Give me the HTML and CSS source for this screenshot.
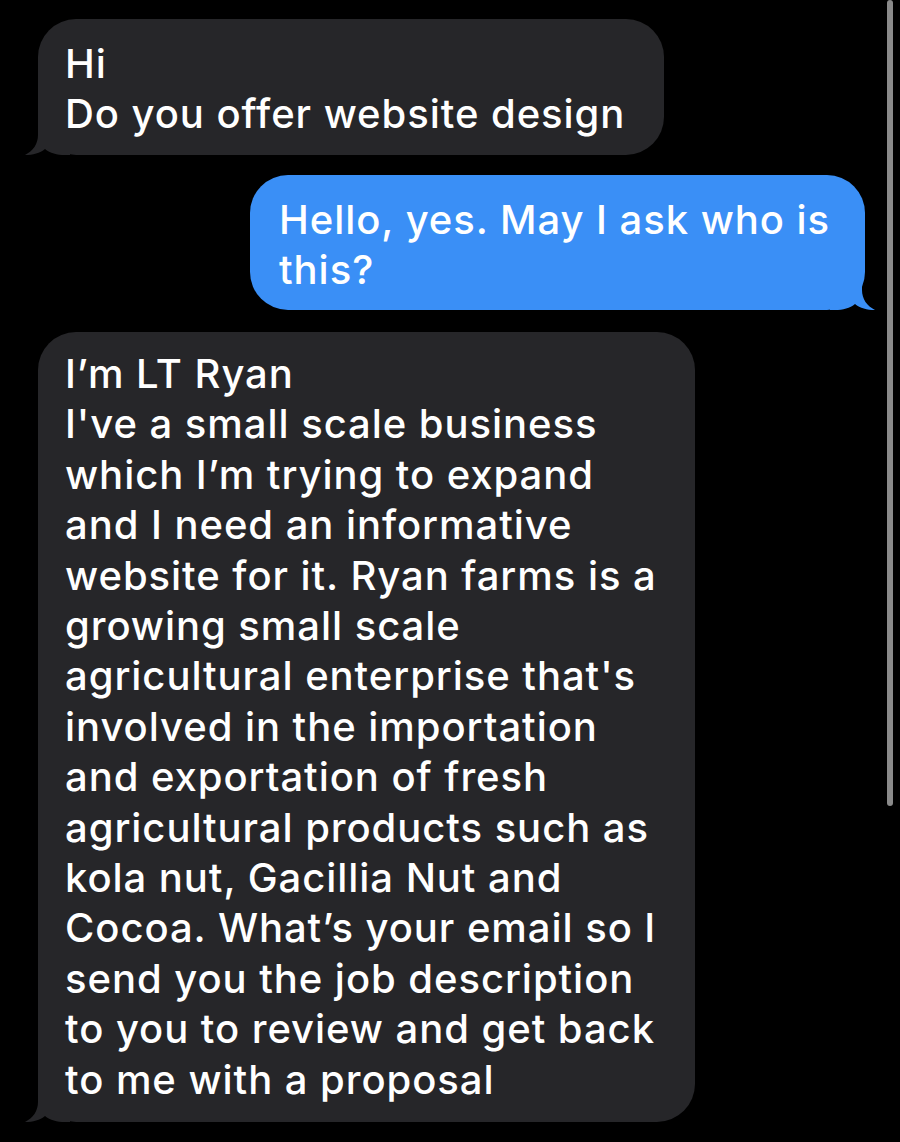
FILE: index.html
```html
<!DOCTYPE html>
<html>
<head>
<meta charset="utf-8">
<link rel="stylesheet" href="styles.css">
</head>
<body>
<div class="thread">
  <div class="bubble in b1">
    <svg class="tail tail-in" width="45" height="40" viewBox="0 0 45 40"><path d="M13 0 L13 20 C13 29 8 36 0 40 C8 40 15 38 20 34 C25 38 32 40 40 40 L45 40 L45 0 Z"/></svg>
    <p class="txt">Hi<br>Do you offer website design</p>
  </div>
  <div class="bubble out b2">
    <svg class="tail tail-out" width="45" height="40" viewBox="0 0 45 40"><path d="M32 0 L32 20 C32 29 37 36 45 40 C37 40 30 38 25 34 C20 38 13 40 5 40 L0 40 L0 0 Z"/></svg>
    <p class="txt">Hello, yes. May I ask who is<br>this?</p>
  </div>
  <div class="bubble in b3">
    <svg class="tail tail-in" width="45" height="40" viewBox="0 0 45 40"><path d="M13 0 L13 20 C13 29 8 36 0 40 C8 40 15 38 20 34 C25 38 32 40 40 40 L45 40 L45 0 Z"/></svg>
    <p class="txt">I’m LT Ryan<br>I've a small scale business<br>which I’m trying to expand<br>and I need an informative<br>website for it. Ryan farms is a<br>growing small scale<br>agricultural enterprise that's<br>involved in the importation<br>and exportation of fresh<br>agricultural products such as<br>kola nut, Gacillia Nut and<br>Cocoa. What’s your email so I<br>send you the job description<br>to you to review and get back<br>to me with a proposal</p>
  </div>
</div>
<div class="scrollbar"></div>
</body>
</html>
```
FILE: styles.css
```css
html, body {
  margin: 0;
  padding: 0;
  background: #000;
}
body {
  width: 900px;
  height: 1142px;
  overflow: hidden;
  position: relative;
  font-family: Inter, "Liberation Sans", sans-serif;
}
.thread {
  display: flex;
  flex-direction: column;
  padding-top: 19px;
}
.bubble {
  position: relative;
  border-radius: 38px;
  box-sizing: border-box;
}
.txt {
  position: relative;
  margin: 0;
  color: #fff;
  font-size: 40px;
  font-weight: 500;
  line-height: 50.4px;
  white-space: nowrap;
  letter-spacing: 0.95px;
}
.in {
  background: #262629;
  align-self: flex-start;
  margin-left: 38px;
}
.in .tail { fill: #262629; }
.out {
  background: #3a8ff6;
  align-self: flex-start;
  margin-left: 250px;
}
.out .tail { fill: #3a8ff6; }
.tail {
  position: absolute;
  bottom: 0;
  display: block;
}
.tail-in { left: -13px; }
.tail-out { right: -10px; }
.b1 {
  width: 626px;
  height: 136px;
  padding: 20px 0 0 27px;
}
.b2 {
  margin-top: 20px;
  width: 615px;
  height: 135px;
  padding: 20px 0 0 29px;
}
.b3 {
  margin-top: 22px;
  width: 657px;
  height: 790px;
  padding: 17px 0 0 27px;
}
.scrollbar {
  position: absolute;
  left: 887px;
  top: 0;
  width: 6px;
  height: 806px;
  border-radius: 3px;
  background: #8a8a8a;
}
```
